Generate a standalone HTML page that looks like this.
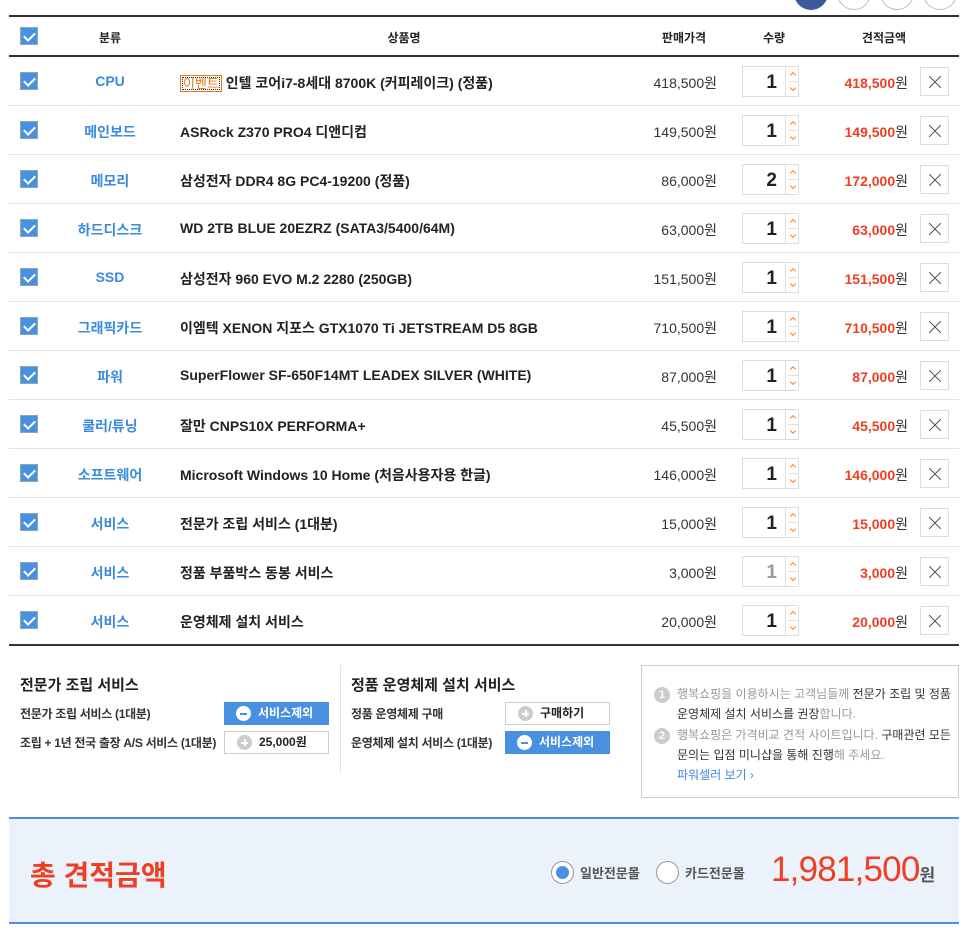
<!DOCTYPE html>
<html><head><meta charset="utf-8"><style>
*{margin:0;padding:0;box-sizing:border-box}
body{width:973px;height:933px;background:#fff;font-family:"Liberation Sans","Noto Sans CJK KR",sans-serif;color:#222;position:relative;overflow:hidden;font-size:14px}
.a{position:absolute}
.circ{position:absolute;top:-24px;width:34px;height:34px;border-radius:50%;border:1px solid #bbb;background:#fff}
.row{position:absolute;left:9px;width:950px;height:49px;border-bottom:1px solid #e3e3e3}
.cb{position:absolute;left:11px;top:15px;width:18px;height:18px;background:#4a90e2;border:1px solid #8aa;}
.cb:after{content:"";position:absolute;left:5px;top:2px;width:5px;height:9px;border:solid #fff;border-width:0 2px 2px 0;transform:rotate(45deg)}
.cat{position:absolute;left:51px;width:100px;text-align:center;top:16px;color:#3a8ae0;font-weight:bold;font-size:14px}
.nm{position:absolute;left:171px;top:16px;font-weight:bold;font-size:14px;color:#222;white-space:nowrap}
.pr{position:absolute;right:242px;top:16px;font-size:14px;color:#333}
.qb{position:absolute;left:733px;top:9px;width:44px;height:31px;border:1px solid #ddd;text-align:right;padding-right:8px;font-size:19px;font-weight:bold;line-height:31px}
.ar{position:absolute;left:776px;top:9px;width:14px;height:31px;border:1px solid #ddd}
.ar svg{position:absolute;left:2px}
.tt{position:absolute;right:51px;top:16px;font-size:14px;color:#333}
.tt b{color:#ef3e22}
.x{position:absolute;left:911px;top:10px;width:29px;height:29px;border:1px solid #ddd}
.x svg{position:absolute;left:8px;top:8px}
.btn{position:absolute;width:105px;height:23px;font-size:12px;font-weight:bold;line-height:23px;padding-left:34px}
.blue{background:#4a90e2;color:#fff}
.wh{border:1px solid #ccc;background:#fff;color:#222;line-height:21px}
.ic{position:absolute;left:12px;top:4px;width:15px;height:15px;border-radius:50%;background:#fff}
.ic:after{content:"";position:absolute;left:4px;top:6.5px;width:7px;height:2px;background:#4a90e2}
.wh .ic{background:#ccc;top:3px}
.wh .ic:after{background:#fff}
.wh .ic:before{content:"";position:absolute;left:6.5px;top:4px;width:2px;height:7px;background:#fff}
.sl{position:absolute;font-size:12px;color:#333;font-weight:bold;letter-spacing:-0.3px}
</style></head><body>
<svg width="0" height="0" style="position:absolute"><defs>
<symbol id="ar" viewBox="0 0 10 31"><path d="M2 9 L5 6 L8 9 M2 22 L5 25 L8 22" fill="none" stroke="#f08a3a" stroke-width="1.2"/><path d="M0 15.5 H10" stroke="#ddd"/></symbol>
<symbol id="xx" viewBox="0 0 12 12"><path d="M0 0 L12 12 M12 0 L0 12" stroke="#555" stroke-width="1"/></symbol>
</defs></svg>
<div class="circ" style="left:794px;background:#3b5a98;border-color:#3b5a98"></div>
<div class="circ" style="left:837px"></div>
<div class="circ" style="left:880px"></div>
<div class="circ" style="left:923px"></div>
<div class="a" style="left:9px;top:15px;width:950px;height:2px;background:#333"></div>
<div class="a" style="left:9px;top:17px;width:950px;height:40px;border-bottom:2px solid #333">
<div class="cb" style="top:10px"></div>
<div class="a" style="left:51px;width:100px;text-align:center;top:12px;font-size:12px;font-weight:bold">분류</div>
<div class="a" style="left:340px;width:110px;text-align:center;top:12px;font-size:12px;font-weight:bold">상품명</div>
<div class="a" style="left:640px;width:70px;text-align:center;top:12px;font-size:12px;font-weight:bold">판매가격</div>
<div class="a" style="left:740px;width:50px;text-align:center;top:12px;font-size:12px;font-weight:bold">수량</div>
<div class="a" style="left:840px;width:70px;text-align:center;top:12px;font-size:12px;font-weight:bold">견적금액</div>
</div>

<div class="row" style="top:57px"><div class="cb"></div><div class="cat">CPU</div><div class="nm"><span style="border:1px solid #e87a1a;color:#e87a1a;font-weight:normal;font-size:13px;padding:0 2px;outline:1px dotted #333;outline-offset:-3px">이벤트</span> 인텔 코어i7-8세대 8700K (커피레이크) (정품)</div><div class="pr">418,500원</div><div class="qb">1</div><div class="ar"><svg width="10" height="29"><use href="#ar"/></svg></div><div class="tt"><b>418,500</b>원</div><div class="x"><svg width="12" height="12"><use href="#xx"/></svg></div></div>
<div class="row" style="top:106px"><div class="cb"></div><div class="cat">메인보드</div><div class="nm">ASRock Z370 PRO4 디앤디컴</div><div class="pr">149,500원</div><div class="qb">1</div><div class="ar"><svg width="10" height="29"><use href="#ar"/></svg></div><div class="tt"><b>149,500</b>원</div><div class="x"><svg width="12" height="12"><use href="#xx"/></svg></div></div>
<div class="row" style="top:155px"><div class="cb"></div><div class="cat">메모리</div><div class="nm">삼성전자 DDR4 8G PC4-19200 (정품)</div><div class="pr">86,000원</div><div class="qb">2</div><div class="ar"><svg width="10" height="29"><use href="#ar"/></svg></div><div class="tt"><b>172,000</b>원</div><div class="x"><svg width="12" height="12"><use href="#xx"/></svg></div></div>
<div class="row" style="top:204px"><div class="cb"></div><div class="cat">하드디스크</div><div class="nm">WD 2TB BLUE 20EZRZ (SATA3/5400/64M)</div><div class="pr">63,000원</div><div class="qb">1</div><div class="ar"><svg width="10" height="29"><use href="#ar"/></svg></div><div class="tt"><b>63,000</b>원</div><div class="x"><svg width="12" height="12"><use href="#xx"/></svg></div></div>
<div class="row" style="top:253px"><div class="cb"></div><div class="cat">SSD</div><div class="nm">삼성전자 960 EVO M.2 2280 (250GB)</div><div class="pr">151,500원</div><div class="qb">1</div><div class="ar"><svg width="10" height="29"><use href="#ar"/></svg></div><div class="tt"><b>151,500</b>원</div><div class="x"><svg width="12" height="12"><use href="#xx"/></svg></div></div>
<div class="row" style="top:302px"><div class="cb"></div><div class="cat">그래픽카드</div><div class="nm">이엠텍 XENON 지포스 GTX1070 Ti JETSTREAM D5 8GB</div><div class="pr">710,500원</div><div class="qb">1</div><div class="ar"><svg width="10" height="29"><use href="#ar"/></svg></div><div class="tt"><b>710,500</b>원</div><div class="x"><svg width="12" height="12"><use href="#xx"/></svg></div></div>
<div class="row" style="top:351px"><div class="cb"></div><div class="cat">파워</div><div class="nm">SuperFlower SF-650F14MT LEADEX SILVER (WHITE)</div><div class="pr">87,000원</div><div class="qb">1</div><div class="ar"><svg width="10" height="29"><use href="#ar"/></svg></div><div class="tt"><b>87,000</b>원</div><div class="x"><svg width="12" height="12"><use href="#xx"/></svg></div></div>
<div class="row" style="top:400px"><div class="cb"></div><div class="cat">쿨러/튜닝</div><div class="nm">잘만 CNPS10X PERFORMA+</div><div class="pr">45,500원</div><div class="qb">1</div><div class="ar"><svg width="10" height="29"><use href="#ar"/></svg></div><div class="tt"><b>45,500</b>원</div><div class="x"><svg width="12" height="12"><use href="#xx"/></svg></div></div>
<div class="row" style="top:449px"><div class="cb"></div><div class="cat">소프트웨어</div><div class="nm">Microsoft Windows 10 Home (처음사용자용 한글)</div><div class="pr">146,000원</div><div class="qb">1</div><div class="ar"><svg width="10" height="29"><use href="#ar"/></svg></div><div class="tt"><b>146,000</b>원</div><div class="x"><svg width="12" height="12"><use href="#xx"/></svg></div></div>
<div class="row" style="top:498px"><div class="cb"></div><div class="cat">서비스</div><div class="nm">전문가 조립 서비스 (1대분)</div><div class="pr">15,000원</div><div class="qb">1</div><div class="ar"><svg width="10" height="29"><use href="#ar"/></svg></div><div class="tt"><b>15,000</b>원</div><div class="x"><svg width="12" height="12"><use href="#xx"/></svg></div></div>
<div class="row" style="top:547px"><div class="cb"></div><div class="cat">서비스</div><div class="nm">정품 부품박스 동봉 서비스</div><div class="pr">3,000원</div><div class="qb" style="color:#999">1</div><div class="ar"><svg width="10" height="29"><use href="#ar"/></svg></div><div class="tt"><b>3,000</b>원</div><div class="x"><svg width="12" height="12"><use href="#xx"/></svg></div></div>
<div class="row" style="top:596px;border-bottom:2px solid #333;height:50px"><div class="cb"></div><div class="cat">서비스</div><div class="nm">운영체제 설치 서비스</div><div class="pr">20,000원</div><div class="qb">1</div><div class="ar"><svg width="10" height="29"><use href="#ar"/></svg></div><div class="tt"><b>20,000</b>원</div><div class="x"><svg width="12" height="12"><use href="#xx"/></svg></div></div>

<div class="a" style="left:20px;top:674px;font-size:15px;font-weight:bold">전문가 조립 서비스</div>
<div class="sl" style="left:20px;top:705px">전문가 조립 서비스 (1대분)</div>
<div class="sl" style="left:20px;top:734px">조립 + 1년 전국 출장 A/S 서비스 (1대분)</div>
<div class="btn blue" style="left:224px;top:702px"><span class="ic"></span>서비스제외</div>
<div class="btn wh" style="left:224px;top:731px"><span class="ic"></span>25,000원</div>
<div class="a" style="left:340px;top:665px;width:1px;height:108px;background:#e3e3e3"></div>
<div class="a" style="left:351px;top:674px;font-size:15px;font-weight:bold">정품 운영체제 설치 서비스</div>
<div class="sl" style="left:351px;top:705px">정품 운영체제 구매</div>
<div class="sl" style="left:351px;top:734px">운영체제 설치 서비스 (1대분)</div>
<div class="btn wh" style="left:505px;top:702px"><span class="ic"></span>구매하기</div>
<div class="btn blue" style="left:505px;top:731px"><span class="ic"></span>서비스제외</div>

<div class="a" style="left:641px;top:665px;width:318px;height:133px;border:1px solid #ccc;font-size:12px;line-height:20px;color:#999;padding:18px 0 0 35px">
<div class="a" style="left:12px;top:21px;width:16px;height:16px;border-radius:50%;background:#ccc;color:#fff;font-size:11px;font-weight:bold;text-align:center;line-height:16px">1</div>
<div class="a" style="left:12px;top:62px;width:16px;height:16px;border-radius:50%;background:#ccc;color:#fff;font-size:11px;font-weight:bold;text-align:center;line-height:16px">2</div>
행복쇼핑을 이용하시는 고객님들께 <span style="color:#333">전문가 조립 및 정품 운영체제 설치 서비스를 권장</span>합니다.<br>
<div style="height:1px"></div>행복쇼핑은 가격비교 견적 사이트입니다. <span style="color:#333">구매관련 모든 문의는 입점 미니샵을 통해 진행</span>해 주세요.<br>
<span style="color:#3a8ae0">파워셀러 보기 ›</span>
</div>

<div class="a" style="left:9px;top:817px;width:950px;height:107px;background:#ebf2fc;border-top:2px solid #4a8fe0;border-bottom:2px solid #4a8fe0">
<div class="a" style="left:21px;top:35px;font-size:28px;color:#ef3e22;font-weight:bold">총 견적금액</div>
<div class="a" style="left:542px;top:42px;width:23px;height:23px;border-radius:50%;border:1px solid #999;background:#fff"><div style="position:absolute;left:4px;top:4px;width:13px;height:13px;border-radius:50%;background:#4a90e2"></div></div>
<div class="a" style="left:571px;top:44px;font-size:13px;font-weight:bold;color:#555">일반전문몰</div>
<div class="a" style="left:647px;top:42px;width:23px;height:23px;border-radius:50%;border:1px solid #999;background:#fff"></div>
<div class="a" style="left:676px;top:44px;font-size:13px;font-weight:bold;color:#555">카드전문몰</div>
<div class="a" style="left:762px;top:31px;font-size:35px;color:#ef3e22;letter-spacing:-0.8px">1,981,500<span style="font-size:17px;color:#555;font-weight:bold">원</span></div>
</div>
</body></html>
